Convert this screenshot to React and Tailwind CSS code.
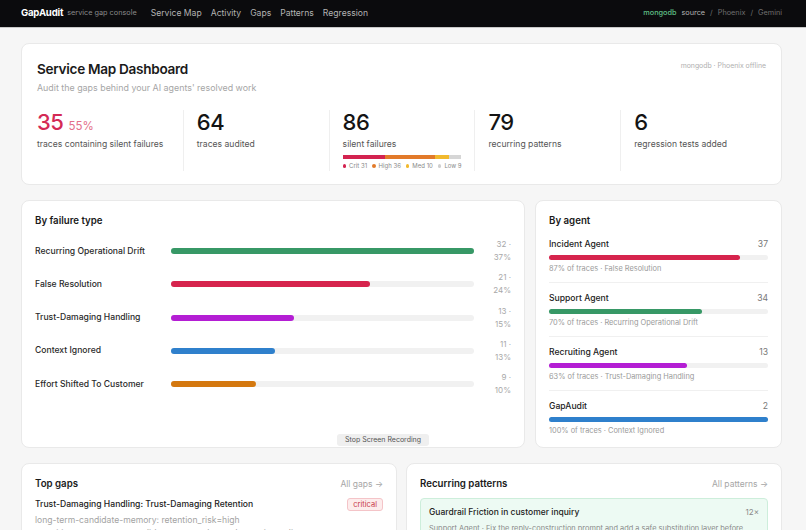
import React from 'react';

const navLinks = ['Service Map', 'Activity', 'Gaps', 'Patterns', 'Regression'];

const stats = [
  { value: '35', extra: '55%', label: 'traces containing silent failures', red: true },
  { value: '64', label: 'traces audited' },
  { value: '86', label: 'silent failures', severity: true },
  { value: '79', label: 'recurring patterns' },
  { value: '6', label: 'regression tests added' },
];

const severity = [
  { label: 'Crit', count: 31, bar: 'bg-[#d32350]', dot: 'bg-[#d32350]' },
  { label: 'High', count: 36, bar: 'bg-[#e27a2a]', dot: 'bg-[#e27a2a]' },
  { label: 'Med', count: 10, bar: 'bg-[#f1b92e]', dot: 'bg-[#f1b92e]' },
  { label: 'Low', count: 9, bar: 'bg-[#d6d6d6]', dot: 'bg-[#cfcfcf]' },
];

const failureTypes = [
  { name: 'Recurring Operational Drift', count: 32, pct: '37%', color: 'bg-[#379866]' },
  { name: 'False Resolution', count: 21, pct: '24%', color: 'bg-[#d6244d]' },
  { name: 'Trust-Damaging Handling', count: 13, pct: '15%', color: 'bg-[#b41ed4]' },
  { name: 'Context Ignored', count: 11, pct: '13%', color: 'bg-[#2f80cc]' },
  { name: 'Effort Shifted To Customer', count: 9, pct: '10%', color: 'bg-[#d4780f]' },
];

const agents = [
  { name: 'Incident Agent', count: 37, pct: 87, top: 'False Resolution', color: 'bg-[#d6244d]' },
  { name: 'Support Agent', count: 34, pct: 70, top: 'Recurring Operational Drift', color: 'bg-[#379866]' },
  { name: 'Recruiting Agent', count: 13, pct: 63, top: 'Trust-Damaging Handling', color: 'bg-[#b41ed4]' },
  { name: 'GapAudit', count: 2, pct: 100, top: 'Context Ignored', color: 'bg-[#2f80cc]' },
];

const maxFailure = Math.max(...failureTypes.map(f => f.count));
const totalSeverity = severity.reduce((s, x) => s + x.count, 0);

const App = () => {
  return (
    <div className="min-h-screen bg-[#f6f6f6] font-['Inter',sans-serif] text-[#1a1a1a]">
      {/* Top nav */}
      <nav className="h-[28px] bg-[#0b0b0d] border-b border-[#c9c9c9] flex items-center justify-between pl-[21px] pr-[24px]">
        <div className="flex items-center">
          <span className="text-white text-[9.6px] font-bold tracking-[-0.2px]">GapAudit</span>
          <span className="ml-[4px] text-[7.3px] text-[#8a8a8a]">service gap console</span>
          <div className="ml-[14px] flex items-center gap-[9px]">
            {navLinks.map(l => (
              <span key={l} className="text-[8.6px] text-[#b3b3b3]">{l}</span>
            ))}
          </div>
        </div>
        <div className="flex items-center text-[7.3px] text-[#6f6f6f]">
          <span className="text-[#5fbf85] font-medium">mongodb</span>
          <span className="ml-[5px] text-[#b3b3b3]">source</span>
          <span className="mx-[5px]">/</span>
          <span>Phoenix</span>
          <span className="mx-[5px]">/</span>
          <span>Gemini</span>
        </div>
      </nav>

      <main className="pl-[21px] pr-[24px] pt-[15px] flex flex-col gap-[15px]">
        {/* Header card */}
        <section className="bg-white rounded-[8px] border border-[#e9e9e9] px-[15px] pt-[15px] pb-[13px]">
          <div className="flex items-start justify-between">
            <div>
              <h1 className="text-[13.6px] leading-[20px] font-semibold tracking-[-0.3px]">Service Map Dashboard</h1>
              <p className="mt-[2px] text-[8.9px] leading-[14px] text-[#a6a6a6]">Audit the gaps behind your AI agents' resolved work</p>
            </div>
            <span className="mt-[2px] text-[6.9px] text-[#b0b0b0]">mongodb · Phoenix offline</span>
          </div>
          <div className="mt-[15px] grid grid-cols-5">
            {stats.map((s, i) => (
              <div key={s.label} className={i === 0 ? 'pr-[13px]' : 'pl-[13px] pr-[13px] border-l border-[#efefef]'}>
                <div className="flex items-baseline h-[24px]">
                  <span className={`text-[22px] leading-[24px] font-medium tracking-[-0.5px] ${s.red ? 'text-[#d42a55]' : 'text-[#141414]'}`}>{s.value}</span>
                  {s.extra && <span className="ml-[5px] text-[11.5px] text-[#e36f8a]">{s.extra}</span>}
                </div>
                <div className="mt-[3px] whitespace-nowrap text-[8.6px] leading-[14px] text-[#555]">{s.label}</div>
                {s.severity && (
                  <>
                    <div className="mt-[4px] flex h-[4px] w-full overflow-hidden">
                      {severity.map(x => (
                        <div key={x.label} className={x.bar} style={{ width: `${(x.count / totalSeverity) * 100}%` }} />
                      ))}
                    </div>
                    <div className="mt-[2px] flex items-center gap-[5px] whitespace-nowrap text-[6px] leading-[10px] text-[#8a8a8a]">
                      {severity.map(x => (
                        <span key={x.label} className="flex items-center gap-[3px]">
                          <span className={`w-[3.5px] h-[3.5px] rounded-full ${x.dot}`} />
                          {x.label} {x.count}
                        </span>
                      ))}
                    </div>
                  </>
                )}
              </div>
            ))}
          </div>
        </section>

        {/* Breakdown row */}
        <div className="grid grid-cols-[1fr_247px] gap-[10px]">
          <section className="relative bg-white rounded-[8px] border border-[#e9e9e9] px-[13px] pt-[12px] h-[248px]">
            <h2 className="text-[9.7px] leading-[16px] font-semibold">By failure type</h2>
            <div className="mt-[9px] flex flex-col gap-[7.3px]">
              {failureTypes.map(f => (
                <div key={f.name} className="flex items-center h-[26px]">
                  <span className="w-[136px] shrink-0 text-[8.6px] font-medium text-[#2a2a2a]">{f.name}</span>
                  <div className="flex-1 h-[6px] rounded-full bg-[#f1f1f1]">
                    <div className={`h-full rounded-full ${f.color}`} style={{ width: `${(f.count / maxFailure) * 100}%` }} />
                  </div>
                  <div className="w-[37px] shrink-0 text-right text-[8px] leading-[13px] text-[#a8a8a8]">
                    <div>{f.count} ·</div>
                    <div>{f.pct}</div>
                  </div>
                </div>
              ))}
            </div>
            <div className="absolute left-[315px] top-[233px] h-[12px] px-[8px] rounded-[3px] bg-[#efefef] text-[7px] leading-[12px] text-[#555]">
              Stop Screen Recording
            </div>
          </section>

          <section className="bg-white rounded-[8px] border border-[#e9e9e9] px-[13px] pt-[12px] h-[248px]">
            <h2 className="text-[9.7px] leading-[16px] font-semibold">By agent</h2>
            <div className="mt-[8px] flex flex-col">
              {agents.map((a, i) => (
                <div key={a.name} className={i === 0 ? 'pb-[7px]' : 'pt-[8px] pb-[7px] border-t border-[#f0f0f0]'}>
                  <div className="flex items-center justify-between h-[14px]">
                    <span className="text-[8.6px] font-medium text-[#222]">{a.name}</span>
                    <span className="text-[8.6px] text-[#777]">{a.count}</span>
                  </div>
                  <div className="mt-[4px] h-[5px] rounded-full bg-[#f1f1f1]">
                    <div className={`h-full rounded-full ${a.color}`} style={{ width: `${a.pct}%` }} />
                  </div>
                  <div className="mt-[3px] text-[7.4px] leading-[12px] text-[#9a9a9a]">{a.pct}% of traces · {a.top}</div>
                </div>
              ))}
            </div>
          </section>
        </div>

        {/* Bottom row */}
        <div className="grid grid-cols-2 gap-[9px]">
          <section className="bg-white rounded-[8px] border border-[#e9e9e9] px-[13px] pt-[12px] pb-[14px]">
            <div className="flex items-center justify-between">
              <h2 className="text-[9.7px] leading-[16px] font-semibold">Top gaps</h2>
              <span className="text-[8.5px] text-[#a6a6a6]">All gaps →</span>
            </div>
            <div className="mt-[6px] flex items-center justify-between">
              <span className="text-[8.6px] font-medium text-[#222]">Trust-Damaging Handling: Trust-Damaging Retention</span>
              <span className="h-[13px] px-[5px] rounded-[3px] border border-[#f4c4c8] bg-[#fdecec] text-[7.5px] leading-[11px] text-[#c73a4a]">critical</span>
            </div>
            <div className="mt-[3px] text-[8.6px] leading-[13px] text-[#a3a3a3]">long-term-candidate-memory: retention_risk=high</div>
            <div className="text-[8.6px] leading-[13px] text-[#a3a3a3]">recruiting agent stores candidate memory beyond retention policy</div>
          </section>

          <section className="bg-white rounded-[8px] border border-[#e9e9e9] px-[13px] pt-[12px] pb-[14px]">
            <div className="flex items-center justify-between">
              <h2 className="text-[9.7px] leading-[16px] font-semibold">Recurring patterns</h2>
              <span className="text-[8.5px] text-[#a6a6a6]">All patterns →</span>
            </div>
            <div className="mt-[6px] rounded-[4px] border border-[#cdeedb] bg-[#edfaf3] px-[8px] pt-[7px] pb-[8px]">
              <div className="flex items-center justify-between">
                <span className="text-[8.5px] font-medium text-[#222]">Guardrail Friction in customer inquiry</span>
                <span className="text-[8px] text-[#8a8a8a]">12×</span>
              </div>
              <div className="mt-[4px] text-[7.4px] leading-[12px] text-[#8a8a8a]">Support Agent · Fix the reply-construction prompt and add a safe substitution layer before sending</div>
            </div>
          </section>
        </div>
      </main>
    </div>
  );
};

export default App;
